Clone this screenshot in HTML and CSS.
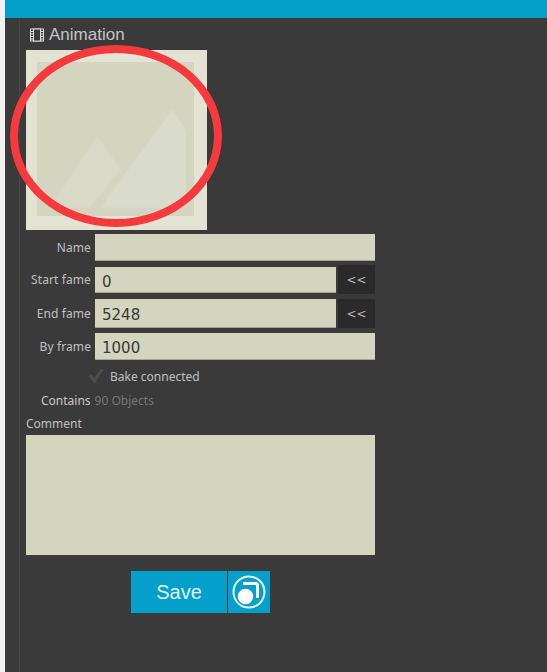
FILE: index.html
```html
<!DOCTYPE html>
<html lang="en">
<head>
    <meta charset="UTF-8">
    <title>Animation</title>
    <link rel="stylesheet" href="styles.css">
</head>
<body>
    <div class="window">
        <div class="top-bar"></div>
        <div class="panel">
            <h2 class="title">
                <svg class="film-icon" width="14" height="14" viewBox="0 0 14 14">
                    <rect x="0.5" y="1" width="13" height="12" fill="none" stroke="#dcdcdc"/>
                    <rect x="3.5" y="1" width="7" height="12" fill="#3a3a3a" stroke="#dcdcdc"/>
                    <path d="M1 3.5h2.5M1 6h2.5M1 8.5h2.5M1 11h2.5M10.5 3.5H13M10.5 6H13M10.5 8.5H13M10.5 11H13" stroke="#dcdcdc"/>
                </svg>
                Animation
            </h2>

            <div class="thumb">
                <svg class="thumb-img" viewBox="0 0 157 154">
                    <rect width="157" height="154" fill="#d3d5bf"/>
                    <g class="mountains">
                        <path d="M13 146 L60 74 L84 108 L52 146Z" fill="#d8dac7"/>
                        <path d="M63 146 L135 48 L149 68 L149 146Z" fill="#dadccb"/>
                    </g>
                </svg>
                <div class="red-circle"></div>
            </div>

            <div class="row row-name">
                <label>Name</label>
                <input class="field" type="text" value="">
            </div>
            <div class="row row-start">
                <label>Start fame</label>
                <input class="field" type="text" value="0">
                <button class="pick" type="button">&lt;&lt;</button>
            </div>
            <div class="row row-end">
                <label>End fame</label>
                <input class="field" type="text" value="5248">
                <button class="pick" type="button">&lt;&lt;</button>
            </div>
            <div class="row row-by">
                <label>By frame</label>
                <input class="field" type="text" value="1000">
            </div>

            <div class="bake">
                <svg width="18" height="18" viewBox="0 0 18 18">
                    <path d="M1.5 9 L5 7.5 L7 11 L14 1.5 L16.5 3 L7.5 16.5Z" fill="#4d4d4d"/>
                </svg>
                <span>Bake connected</span>
            </div>
            <div class="contains">
                <span class="contains-label">Contains</span>
                <span class="contains-value">90 Objects</span>
            </div>

            <div class="comment-label">Comment</div>
            <textarea class="comment"></textarea>

            <div class="actions">
                <button class="save" type="button">Save</button>
                <button class="save-icon" type="button">
                    <svg width="34" height="34" viewBox="0 0 34 34">
                        <circle cx="17" cy="17" r="15.5" fill="none" stroke="#e8f7fb" stroke-width="2"/>
                        <path d="M11 8.5 H23.5 Q25.5 8.5 25.5 10.5 V23" fill="none" stroke="#fff" stroke-width="3"/>
                        <circle cx="13.5" cy="21.5" r="8.5" fill="#fff" stroke="#04a0cb" stroke-width="1.5"/>
                    </svg>
                </button>
            </div>
        </div>
    </div>
</body>
</html>
```

FILE: styles.css
```css
html, body {
    margin: 0;
    height: 100%;
    overflow: hidden;
}

body {
    background: #f2f2f2;
    color: #c8c8c8;
    font-family: "Noto Sans", "DejaVu Sans", sans-serif;
    font-size: 12px;
}

.window {
    height: 672px;
    margin-left: 5px;
    background: #3a3a3a;
}

.top-bar {
    height: 18px;
    background: #049fc8;
}

.panel {
    height: 654px;
    margin-left: 14px;
    border-left: 1px solid #454545;
    padding: 6px 0 0 6px;
    box-sizing: border-box;
}

.title {
    display: flex;
    align-items: center;
    gap: 5px;
    height: 22px;
    margin: 0 0 4px 4px;
    font-family: "Liberation Sans", Arial, sans-serif;
    font-size: 17px;
    font-weight: 400;
    color: #c4c4c4;
}

.thumb {
    position: relative;
    width: 181px;
    height: 180px;
    padding: 12px 13px 14px 11px;
    box-sizing: border-box;
    background: #e2e3d3;
}

.thumb-img {
    display: block;
    width: 157px;
    height: 154px;
}

.mountains {
    filter: blur(1px);
}

.red-circle {
    position: absolute;
    left: -16px;
    top: -5px;
    width: 212px;
    height: 182px;
    border: 8px solid #f53a3d;
    border-radius: 50%;
    box-sizing: border-box;
}

.row {
    display: flex;
    align-items: center;
    gap: 4px;
    width: 349px;
    margin-top: 5px;
}

.row-name {
    margin-top: 4px;
}

.row-start {
    margin-top: 4px;
}

.row label {
    width: 65px;
    text-align: right;
    flex-shrink: 0;
    color: #c0c0c0;
    letter-spacing: 0.1px;
}

.field {
    flex: 1;
    min-width: 0;
    height: 27px;
    padding: 4px 7px 0;
    border: none;
    border-bottom: 1px solid #a5a793;
    border-radius: 0;
    box-sizing: border-box;
    background: #d3d5bf;
    color: #3a3a34;
    font-family: "DejaVu Sans", sans-serif;
    font-size: 15px;
    outline: none;
}

.row-start .field {
    height: 26px;
    margin-top: 1px;
}

.row-end .field {
    height: 29px;
}

.pick {
    width: 37px;
    height: 29px;
    margin-left: -2px;
    padding: 0;
    border: none;
    background: #2a2a2a;
    color: #b8b8b8;
    font-family: "DejaVu Sans", sans-serif;
    font-size: 12px;
}

.bake {
    display: flex;
    align-items: center;
    gap: 5px;
    height: 18px;
    margin-top: 7px;
    padding-left: 61px;
    color: #c0c0c0;
}

.contains {
    display: flex;
    gap: 4px;
    margin-top: 7px;
    padding-left: 15px;
}

.contains-value {
    color: #777;
}

.comment-label {
    margin-top: 6px;
    color: #c0c0c0;
}

.comment {
    display: block;
    width: 349px;
    height: 120px;
    margin-top: 3px;
    padding: 0;
    border: none;
    border-radius: 0;
    background: #d3d5bf;
    resize: none;
    outline: none;
}

.actions {
    display: flex;
    gap: 1px;
    width: 349px;
    margin-top: 16px;
    padding-left: 105px;
    box-sizing: border-box;
}

.save, .save-icon {
    height: 42px;
    padding: 0;
    border: none;
    background: #04a0cb;
    color: #e0f4fa;
}

.save {
    width: 96px;
    font-family: "Liberation Sans", Arial, sans-serif;
    font-size: 20px;
}

.save-icon {
    display: flex;
    align-items: center;
    justify-content: center;
    width: 42px;
}
```
